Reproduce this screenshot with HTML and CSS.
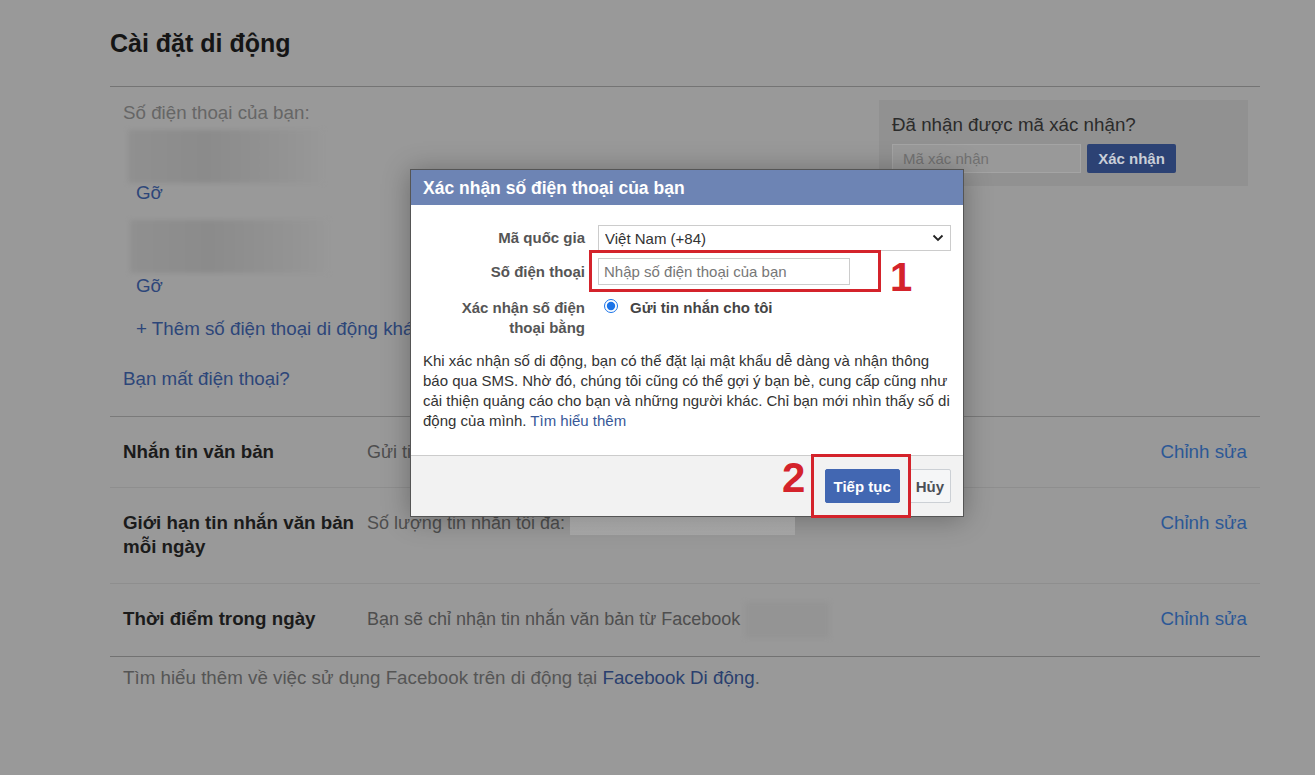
FILE: index.html
```html
<!DOCTYPE html>
<html lang="vi">
<head>
    <meta charset="UTF-8">
    <meta name="viewport" content="width=device-width, initial-scale=1.0">
    <title>Cài đặt di động</title>
    <link rel="stylesheet" href="styles.css">
</head>
<body>
    <div class="page">
        <h1 class="page-title">Cài đặt di động</h1>

        <div class="phones">
            <div class="phone-list">
                <div class="muted">Số điện thoại của bạn:</div>
                <div class="blur blur-phone"></div>
                <a class="link remove">Gỡ</a>
                <div class="blur blur-phone second"></div>
                <a class="link remove second">Gỡ</a>
                <a class="link add-phone">+ Thêm số điện thoại di động khác</a>
                <a class="link lost">Bạn mất điện thoại?</a>
            </div>
            <div class="code-box">
                <div class="code-title">Đã nhận được mã xác nhận?</div>
                <div class="code-form">
                    <input type="text" class="code-input" placeholder="Mã xác nhận">
                    <button class="code-btn">Xác nhận</button>
                </div>
            </div>
        </div>

        <div class="setting-row">
            <div class="setting-name">Nhắn tin văn bản</div>
            <div class="setting-desc">Gửi tin nhắn văn bản đến điện thoại của bạn</div>
            <a class="edit">Chỉnh sửa</a>
        </div>
        <div class="setting-row">
            <div class="setting-name">Giới hạn tin nhắn văn bản mỗi ngày</div>
            <div class="setting-desc">Số lượng tin nhắn tối đa: <span class="blur blur-limit"></span></div>
            <a class="edit">Chỉnh sửa</a>
        </div>
        <div class="setting-row last">
            <div class="setting-name">Thời điểm trong ngày</div>
            <div class="setting-desc">Bạn sẽ chỉ nhận tin nhắn văn bản từ Facebook <span class="blur blur-time"></span></div>
            <a class="edit">Chỉnh sửa</a>
        </div>

        <p class="page-foot">Tìm hiểu thêm về việc sử dụng Facebook trên di động tại <a class="foot-link">Facebook Di động</a>.</p>
    </div>

    <div class="dialog">
        <div class="dialog-head">Xác nhận số điện thoại của bạn</div>
        <div class="dialog-body">
            <div class="form-row">
                <label class="form-label">Mã quốc gia</label>
                <div class="select-wrap">
                    <select class="country">
                        <option>Việt Nam (+84)</option>
                    </select>
                    <svg class="chevron" width="12" height="8" viewBox="0 0 12 8">
                        <polyline points="1.5,1.5 6,6 10.5,1.5" fill="none" stroke="#222" stroke-width="1.8"/>
                    </svg>
                </div>
            </div>
            <div class="form-row">
                <label class="form-label">Số điện thoại</label>
                <input type="text" class="phone-input" placeholder="Nhập số điện thoại của bạn">
            </div>
            <div class="form-row top">
                <label class="form-label">Xác nhận số điện thoại bằng</label>
                <div class="radio-line">
                    <input type="radio" name="via" checked>
                    <span>Gửi tin nhắn cho tôi</span>
                </div>
            </div>
            <p class="dialog-text">Khi xác nhận số di động, bạn có thể đặt lại mật khẩu dễ dàng và nhận thông báo qua SMS. Nhờ đó, chúng tôi cũng có thể gợi ý bạn bè, cung cấp cũng như cải thiện quảng cáo cho bạn và những người khác. Chỉ bạn mới nhìn thấy số di động của mình. <a class="dialog-link">Tìm hiểu thêm</a></p>
        </div>
        <div class="dialog-foot">
            <button class="btn btn-primary">Tiếp tục</button>
            <button class="btn">Hủy</button>
        </div>

        <div class="mark mark-1"></div>
        <div class="mark-num num-1">1</div>
        <div class="mark mark-2"></div>
        <div class="mark-num num-2">2</div>
    </div>
</body>
</html>
```

FILE: styles.css
```css
body {
    margin: 0;
    background-color: #999;
    font-family: "Liberation Sans", Arial, sans-serif;
    font-size: 18.75px;
    color: #4e4e4e;
    height: 775px;
    overflow: hidden;
}

a {
    cursor: pointer;
}

.page {
    width: 1150px;
    margin-left: 110px;
}

.page-title {
    margin: 0;
    padding: 28px 0 28px;
    font-size: 25px;
    line-height: 30px;
    color: #151515;
    border-bottom: 1px solid #747474;
}

/* phone numbers + code box */
.phones {
    display: flex;
    justify-content: space-between;
    align-items: flex-start;
    padding: 14px 12px 25px 13px;
    border-bottom: 1px solid #7a7a7a;
}

.phone-list {
    display: flex;
    flex-direction: column;
    align-items: flex-start;
    line-height: 24px;
}

.muted {
    color: #666;
}

.link {
    color: #2d4679;
}

.blur {
    display: inline-block;
    filter: blur(2px);
}

.blur-phone {
    width: 195px;
    height: 53px;
    margin: 5px 0 0 5px;
    background: linear-gradient(90deg, #909090 0%, #8b8b8b 40%, #939393 80%, #989898 100%);
}

.blur-phone.second {
    width: 198px;
    margin: 17px 0 0 7px;
}

.remove {
    margin-left: 13px;
    line-height: 20px;
}

.remove.second {
    margin-top: 3px;
}

.add-phone {
    margin: 21px 0 0 13px;
}

.lost {
    margin-top: 26px;
}

.code-box {
    width: 343px;
    margin-top: -1px;
    padding: 13px;
    background-color: #919191;
}

.code-title {
    line-height: 24px;
    color: #2b2b2b;
}

.code-form {
    display: flex;
    gap: 6px;
    margin-top: 7px;
}

.code-input {
    width: 189px;
    height: 29px;
    box-sizing: border-box;
    padding: 0 10px;
    border: 1px solid #a4a4a4;
    background-color: #999;
    font-family: inherit;
    font-size: 15px;
}

.code-input::placeholder {
    color: #727272;
}

.code-btn {
    width: 89px;
    height: 29px;
    border: none;
    border-radius: 2px;
    background-color: #2c4274;
    color: #c9ced8;
    font-family: inherit;
    font-size: 15px;
    font-weight: bold;
}

/* settings rows */
.setting-row {
    display: grid;
    grid-template-columns: 244px 1fr auto;
    padding: 23px 13px;
    line-height: 24px;
    border-bottom: 1px solid #8e8e8e;
}

.setting-row + .setting-row {
    padding-bottom: 24px;
}

.setting-row.last {
    border-bottom-color: #727272;
}

.setting-name {
    padding-right: 8px;
    font-weight: bold;
    color: #1b1b1b;
}

.setting-desc {
    font-size: 18px;
    color: #4e4e4e;
}

.blur-limit {
    width: 225px;
    height: 24px;
    vertical-align: top;
    background: linear-gradient(180deg, #bcbcbc 0%, #a9a9a9 100%);
    filter: none;
}

.blur-time {
    width: 84px;
    height: 36px;
    margin: -6px 0;
    vertical-align: middle;
    background-color: #949494;
}

.edit {
    color: #2c5896;
}

.page-foot {
    margin: 0;
    padding: 9px 13px 0;
    line-height: 24px;
    color: #555;
}

.foot-link {
    color: #2a3f6e;
}

/* dialog */
.dialog {
    position: absolute;
    left: 410px;
    top: 169px;
    width: 552px;
    border: 1px solid #555;
    background-color: #fff;
    font-size: 15px;
    box-shadow: 0 2px 26px rgba(0, 0, 0, 0.3);
}

.dialog-head {
    height: 35px;
    padding: 0 12px;
    background-color: #6d84b4;
    color: #fff;
    font-size: 17.5px;
    font-weight: bold;
    line-height: 36px;
}

.dialog-body {
    padding: 20px 12px 24px;
}

.form-row {
    display: grid;
    grid-template-columns: 162px 1fr;
    column-gap: 13px;
    align-items: center;
    margin-bottom: 7px;
}

.form-row.top {
    align-items: start;
    margin-top: 13px;
    margin-bottom: 0;
}

.form-label {
    text-align: right;
    font-weight: bold;
    line-height: 20px;
    color: #555;
}

.select-wrap {
    position: relative;
}

.country {
    display: block;
    width: 100%;
    height: 26px;
    padding: 0 6px;
    border: 1px solid #ccc;
    border-radius: 0;
    background-color: #fff;
    font-family: inherit;
    font-size: 15px;
    color: #333;
    appearance: none;
}

.chevron {
    position: absolute;
    right: 7px;
    top: 9px;
}

.phone-input {
    width: 252px;
    height: 27px;
    box-sizing: border-box;
    padding: 0 5px;
    border: 1px solid #ccc;
    font-family: inherit;
    font-size: 15px;
}

.phone-input::placeholder {
    color: #777;
}

.radio-line {
    display: flex;
    align-items: flex-start;
    gap: 12px;
    line-height: 20px;
    font-weight: bold;
    color: #444;
}

.radio-line input {
    width: 14px;
    height: 14px;
    margin: 1px 0 0 6px;
    accent-color: #1a73e8;
}

.dialog-text {
    margin: 13px 0 0;
    line-height: 20px;
    color: #333;
}

.dialog-link {
    color: #385898;
}

.dialog-foot {
    display: flex;
    justify-content: flex-end;
    gap: 9px;
    height: 47px;
    padding: 13px 12px 0;
    border-top: 1px solid #ccc;
    background-color: #f2f2f2;
}

.btn {
    height: 34px;
    padding: 0 6px;
    border: 1px solid #ccd0d5;
    border-radius: 2px;
    background-color: #f5f6f7;
    color: #4b4f56;
    font-family: inherit;
    font-size: 15px;
    font-weight: bold;
}

.btn-primary {
    width: 75px;
    border-color: #4267b2;
    background-color: #4267b2;
    color: #fff;
}

/* red annotations */
.mark {
    position: absolute;
    box-sizing: border-box;
    border: 3px solid #d4232b;
}

.mark-1 {
    left: 178px;
    top: 80px;
    width: 292px;
    height: 42px;
}

.mark-2 {
    left: 400px;
    top: 284px;
    width: 100px;
    height: 64px;
}

.mark-num {
    position: absolute;
    color: #d4232b;
    font-weight: bold;
}

.num-1 {
    left: 479px;
    top: 87px;
    font-size: 40px;
    line-height: 40px;
}

.num-2 {
    left: 371px;
    top: 287px;
    font-size: 42px;
    line-height: 42px;
}
```
